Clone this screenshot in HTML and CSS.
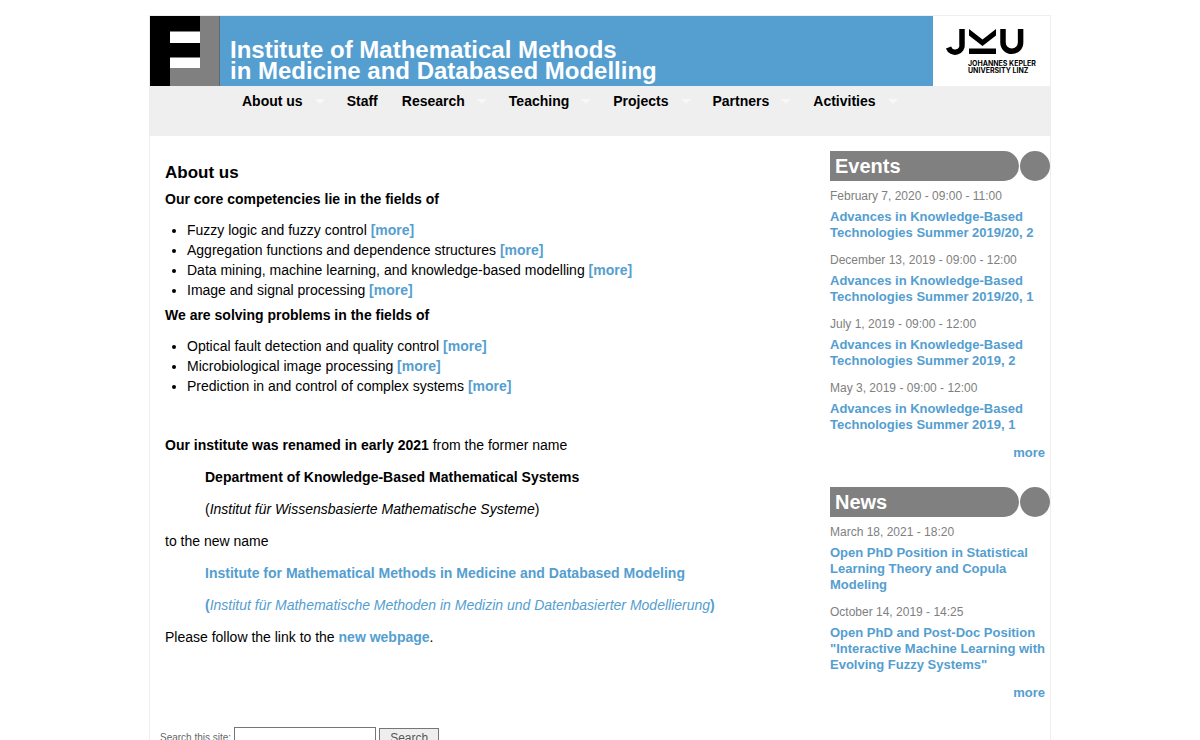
FILE: index.html
```html
<!DOCTYPE html>
<html lang="en">
  <head>
    <meta charset="UTF-8" />
    <meta name="viewport" content="width=device-width, initial-scale=1.0" />
    <title>About us | Institute of Mathematical Methods</title>
    <link rel="stylesheet" href="styles.css">
  </head>
  <body>
    <div class="page">
      <header class="header">
        <svg class="logo" viewBox="0 0 70 70" aria-hidden="true">
          <rect width="70" height="70" fill="#808080" />
          <path d="M0 0h50v53H20v17H0z" fill="#000" />
          <path d="M20 15.500h30V27H20zM20 41.500h30v11H20z" fill="#fff" />
          <path d="M69 0h1v70h-1z" fill="#5b6b75" />
        </svg>
        <h1 class="site-name">
          Institute of Mathematical Methods<br />
          in Medicine and Databased Modelling
        </h1>
        <a class="jku" href="#" aria-label="Johannes Kepler University Linz">
          <svg class="jku-logo" viewBox="0 0 117 70">
            <path d="M29 13v15a7 7 0 0 1-13.500 3.500" fill="none" stroke="#000" stroke-width="5.500" />
            <path d="M36 13l13.500 10.500L63 13v6.500L49.500 30 36 19.500z" />
            <path d="M36 32.500h27V38H36z" />
            <path d="M70 13v13.500a8.800 8.800 0 0 0 17.600 0V13" fill="none" stroke="#000" stroke-width="5.500" />
            <text class="jku-text" x="35" y="50">JOHANNES KEPLER</text>
            <text class="jku-text" x="35" y="57">UNIVERSITY LINZ</text>
          </svg>
        </a>
      </header>

      <nav class="nav">
        <a class="nav-link has-menu" href="#">About us</a>
        <a class="nav-link" href="#">Staff</a>
        <a class="nav-link has-menu" href="#">Research</a>
        <a class="nav-link has-menu" href="#">Teaching</a>
        <a class="nav-link has-menu" href="#">Projects</a>
        <a class="nav-link has-menu" href="#">Partners</a>
        <a class="nav-link has-menu" href="#">Activities</a>
      </nav>

      <div class="columns">
        <main class="content">
          <h2 class="page-title">About us</h2>
          <h3 class="subtitle">Our core competencies lie in the fields of</h3>
          <ul class="list">
            <li>Fuzzy logic and fuzzy control <a href="#">[more]</a></li>
            <li>Aggregation functions and dependence structures <a href="#">[more]</a></li>
            <li>Data mining, machine learning, and knowledge-based modelling <a href="#">[more]</a></li>
            <li>Image and signal processing <a href="#">[more]</a></li>
          </ul>
          <h3 class="subtitle">We are solving problems in the fields of</h3>
          <ul class="list">
            <li>Optical fault detection and quality control <a href="#">[more]</a></li>
            <li>Microbiological image processing <a href="#">[more]</a></li>
            <li>Prediction in and control of complex systems <a href="#">[more]</a></li>
          </ul>

          <div class="notice">
            <p><strong>Our institute was renamed in early 2021</strong> from the former name</p>
            <p class="indent"><strong>Department of Knowledge-Based Mathematical Systems</strong></p>
            <p class="indent">(<em>Institut für Wissensbasierte Mathematische Systeme</em>)</p>
            <p>to the new name</p>
            <p class="indent new-name"><strong>Institute for Mathematical Methods in Medicine and Databased Modeling</strong></p>
            <p class="indent new-name"><strong>(</strong><em>Institut für Mathematische Methoden in Medizin und Datenbasierter Modellierung</em><strong>)</strong></p>
            <p>Please follow the link to the <a href="#">new webpage</a>.</p>
          </div>
        </main>

        <aside class="sidebar">
          <section class="block">
            <h2 class="block-title"><span>Events</span></h2>
            <div class="item">
              <div class="date">February 7, 2020 - 09:00 - 11:00</div>
              <a href="#">Advances in Knowledge-Based Technologies Summer 2019/20, 2</a>
            </div>
            <div class="item">
              <div class="date">December 13, 2019 - 09:00 - 12:00</div>
              <a href="#">Advances in Knowledge-Based Technologies Summer 2019/20, 1</a>
            </div>
            <div class="item">
              <div class="date">July 1, 2019 - 09:00 - 12:00</div>
              <a href="#">Advances in Knowledge-Based Technologies Summer 2019, 2</a>
            </div>
            <div class="item">
              <div class="date">May 3, 2019 - 09:00 - 12:00</div>
              <a href="#">Advances in Knowledge-Based Technologies Summer 2019, 1</a>
            </div>
            <div class="more"><a href="#">more</a></div>
          </section>

          <section class="block">
            <h2 class="block-title"><span>News</span></h2>
            <div class="item">
              <div class="date">March 18, 2021 - 18:20</div>
              <a href="#">Open PhD Position in Statistical Learning Theory and Copula Modeling</a>
            </div>
            <div class="item">
              <div class="date">October 14, 2019 - 14:25</div>
              <a href="#">Open PhD and Post-Doc Position "Interactive Machine Learning with Evolving Fuzzy Systems"</a>
            </div>
            <div class="more"><a href="#">more</a></div>
          </section>
        </aside>
      </div>

      <form class="search">
        <label for="search-text">Search this site:</label>
        <input class="search-text" id="search-text" type="text" />
        <button class="search-button" type="submit">Search</button>
      </form>
    </div>
  </body>
</html>
```
FILE: styles.css
```css
* {
  box-sizing: border-box;
}

body {
  margin: 0;
  background-color: white;
  font-family: Arial, "Liberation Sans", Helvetica, sans-serif;
  font-size: 14px;
  line-height: 20px;
  color: black;
}

a {
  color: #549ed0;
  font-weight: bold;
  text-decoration: none;
}

a:hover {
  text-decoration: underline;
}

.page {
  max-width: 902px;
  margin: 15px auto 0;
  border: 1px solid #eee;
}

/* header */
.header {
  display: flex;
  background-color: #549ed0;
}

.logo {
  width: 70px;
  height: 70px;
  flex: none;
}

.site-name {
  flex: 1;
  align-self: flex-end;
  margin: 0;
  padding: 0 10px 5px;
  font-size: 24px;
  line-height: 21px;
  color: white;
}

.jku {
  flex: none;
  background-color: white;
}

.jku-logo {
  display: block;
  width: 117px;
  height: 70px;
}

.jku-text {
  font-family: Inter, sans-serif;
  font-size: 7px;
  font-weight: bold;
}

/* main menu */
.nav {
  display: flex;
  flex-wrap: wrap;
  min-height: 50px;
  padding: 5px 80px 0;
  background-color: #efefef;
}

.nav-link {
  display: flex;
  height: 20px;
  padding: 0 12px;
  color: black;
}

.has-menu {
  padding-right: 10px;
}

.has-menu::after {
  content: "";
  align-self: center;
  margin-left: 12px;
  border: 5px solid transparent;
  border-top-color: #f8f8f8;
  border-bottom: none;
}

/* content and sidebar */
.columns {
  display: flex;
}

.content {
  flex: 1;
  padding: 25px 15px 0;
}

.page-title {
  margin: 0;
  font-size: 17px;
  line-height: 24px;
}

.subtitle {
  margin: 4px 0 11px;
  font-size: 14px;
}

.list {
  margin: 0 0 5px;
  padding-left: 22px;
}

.notice {
  margin-top: 39px;
}

.notice p {
  margin: 0 0 12px;
}

.notice .indent {
  margin-left: 40px;
}

.new-name {
  color: #549ed0;
}

.sidebar {
  flex: none;
  width: 220px;
  padding-top: 15px;
  font-size: 13px;
  line-height: 16px;
}

.block {
  margin-bottom: 26px;
}

.block-title {
  display: flex;
  gap: 1px;
  margin: 0 0 7px;
  font-size: 20px;
  line-height: 30px;
  color: white;
}

.block-title span {
  flex: 1;
  padding-left: 5px;
  border-radius: 0 15px 15px 0;
  background-color: #808080;
}

.block-title::after {
  content: "";
  width: 30px;
  height: 30px;
  border-radius: 50%;
  background-color: #808080;
}

.item {
  margin-bottom: 11px;
}

.date {
  margin-bottom: 5px;
  font-size: 12px;
  color: #808080;
}

.more {
  padding: 1px 5px 0 0;
  text-align: right;
}

/* search */
.search {
  display: flex;
  align-items: center;
  gap: 3px;
  padding: 0 10px 10px;
  font-size: 10px;
  color: #666;
}

.search-text {
  width: 142px;
  height: 22px;
  border: 1px solid #767676;
}

.search-button {
  width: 60px;
  height: 20px;
  padding: 0;
  border: 1px solid #767676;
  background-color: #eee;
  font-family: inherit;
  font-size: 12px;
  color: #555;
}

@media (max-width: 768px) {
  .columns {
    flex-direction: column;
  }

  .sidebar {
    width: auto;
    padding: 15px;
  }

  .nav {
    padding: 5px 0;
  }
}
```
